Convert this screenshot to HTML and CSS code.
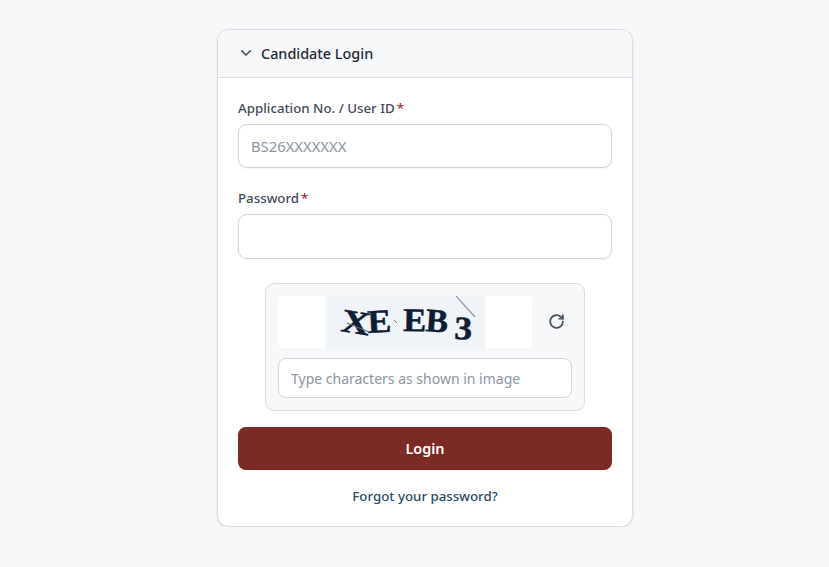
FILE: index.html
```html
<!DOCTYPE html>
<html lang="en">
<head>
  <meta charset="UTF-8">
  <meta name="viewport" content="width=device-width, initial-scale=1.0">
  <title>Candidate Login</title>
  <link rel="stylesheet" href="styles.css">
</head>
<body>
  <div class="card">
    <div class="card-header">
      <svg class="chevron" width="12" height="12" viewBox="0 0 12 12" fill="none" stroke="#4b5563" stroke-width="1.7" stroke-linecap="round" stroke-linejoin="round"><path d="M1.8 3.8 6 8l4.2-4.2"/></svg>
      <span>Candidate Login</span>
    </div>
    <form class="card-body">
      <div class="field">
        <label for="user">Application No. / User ID<span class="req">*</span></label>
        <input type="text" id="user" class="text-input" placeholder="BS26XXXXXXX">
      </div>
      <div class="field">
        <label for="password">Password<span class="req">*</span></label>
        <input type="password" id="password" class="text-input password-input">
      </div>

      <!-- captcha -->
      <div class="captcha">
        <div class="captcha-row">
          <div class="captcha-frame">
            <div class="captcha-image">
              <svg class="captcha-art" width="160" height="52" viewBox="0 0 160 52">
                <text class="cap" transform="translate(15 35) rotate(9) scale(1.2 1)">X</text>
                <text class="cap" transform="translate(43 37) rotate(-3) scale(1.08 1)">E</text>
                <text class="cap" transform="translate(78 35) rotate(1) scale(1.05 1)">E</text>
                <text class="cap" transform="translate(100 35) rotate(4) scale(1.02 1)">B</text>
                <text class="cap" transform="translate(129 43) rotate(2) scale(1.08 1)">3</text>
                <path d="M131 0l19 21" stroke="#8b98a8" stroke-width="1.2" fill="none"/>
                <path d="M22 27l22 9" stroke="#5c6b7c" stroke-width="1.2" fill="none"/>
                <path d="M69 24l3 3" stroke="#6b7a8a" stroke-width="1" fill="none"/>
              </svg>
            </div>
          </div>
          <button type="button" class="refresh" aria-label="Refresh">
            <svg width="17" height="17" viewBox="0 0 24 24" fill="none" stroke="#4b5563" stroke-width="2.6" stroke-linecap="round" stroke-linejoin="round"><path d="M21 12a9 9 0 1 1-3-6.7L21 8"/><path d="M21 3v5h-5"/></svg>
          </button>
        </div>
        <input type="text" class="captcha-input" placeholder="Type characters as shown in image">
      </div>

      <button type="button" class="login-button">Login</button>
      <a class="forgot" href="#">Forgot your password?</a>
    </form>
  </div>
</body>
</html>
```

FILE: styles.css
```css
* {
  box-sizing: border-box;
}

body {
  font-family: "Noto Sans", sans-serif;
  background-color: #f7f8fa;
  margin: 0;
  padding: 29px 0 0 21px;
}

.card {
  width: 416px;
  height: 498px;
  margin: 0 auto;
  background: #ffffff;
  border: 1px solid #d9dce2;
  border-radius: 12px;
  box-shadow: 0 1px 3px rgba(0, 0, 0, 0.1);
  overflow: hidden;
}

.card-header {
  display: flex;
  align-items: center;
  height: 48px;
  padding: 0 22px 1px;
  gap: 9px;
  background-color: #f7f8fa;
  border-bottom: 1px solid #d9dce2;
  font-size: 14.4px;
  font-weight: 500;
  color: #1f2937;
}

.card-body {
  display: flex;
  flex-direction: column;
  padding: 20px 20px 0;
}

.field {
  display: flex;
  flex-direction: column;
  margin-bottom: 20px;
}

.field label {
  font-size: 13.3px;
  font-weight: 500;
  line-height: 20px;
  color: #434c5b;
  margin-bottom: 6px;
}

.req {
  color: #9b2c2c;
  margin-left: 2px;
}

.text-input, .captcha-input {
  font-family: inherit;
  background: #ffffff;
  border: 1px solid #d1d5db;
  color: #1f2937;
}

.text-input {
  height: 44px;
  padding: 0 12px;
  font-size: 14.8px;
  border-radius: 9px;
  box-shadow: 0 1px 2px rgba(0, 0, 0, 0.05);
}

.password-input {
  height: 45px;
}

.text-input::placeholder, .captcha-input::placeholder {
  color: #8b95a3;
  opacity: 1;
}

.captcha {
  align-self: center;
  width: 320px;
  height: 128px;
  margin-top: 4px;
  padding: 12px;
  background-color: #f7f8fa;
  border: 1px solid #d9dce2;
  border-radius: 9px;
}

.captcha-row {
  display: flex;
  align-items: center;
  margin-bottom: 10px;
}

.captcha-frame {
  display: flex;
  justify-content: center;
  flex: none;
  width: 254px;
  height: 52px;
  background: #ffffff;
  border-radius: 5px;
}

.captcha-image {
  width: 160px;
  height: 52px;
  background-color: #f0f4f9;
}

.captcha-art {
  display: block;
}

.cap {
  font-family: "Liberation Serif", serif;
  font-weight: bold;
  font-size: 33px;
  fill: #0f1c33;
  stroke: #0f1c33;
  stroke-width: 0.5px;
}

.refresh {
  display: flex;
  align-items: center;
  justify-content: center;
  flex: none;
  width: 32px;
  height: 40px;
  margin: -2px 0 0 8px;
  padding: 0;
  background: none;
  border: none;
  cursor: pointer;
}

.captcha-input {
  display: block;
  width: 294px;
  height: 40px;
  padding: 0 12px;
  font-size: 14px;
  border-radius: 8px;
}

.login-button {
  height: 43px;
  margin-top: 16px;
  font-family: inherit;
  font-size: 14.4px;
  font-weight: 600;
  color: #ffffff;
  background-color: #7b2a24;
  border: none;
  border-radius: 8px;
  cursor: pointer;
}

.forgot {
  margin-top: 16px;
  text-align: center;
  font-size: 13.3px;
  font-weight: 500;
  line-height: 20px;
  color: #2c4a68;
  text-decoration: none;
}
```
